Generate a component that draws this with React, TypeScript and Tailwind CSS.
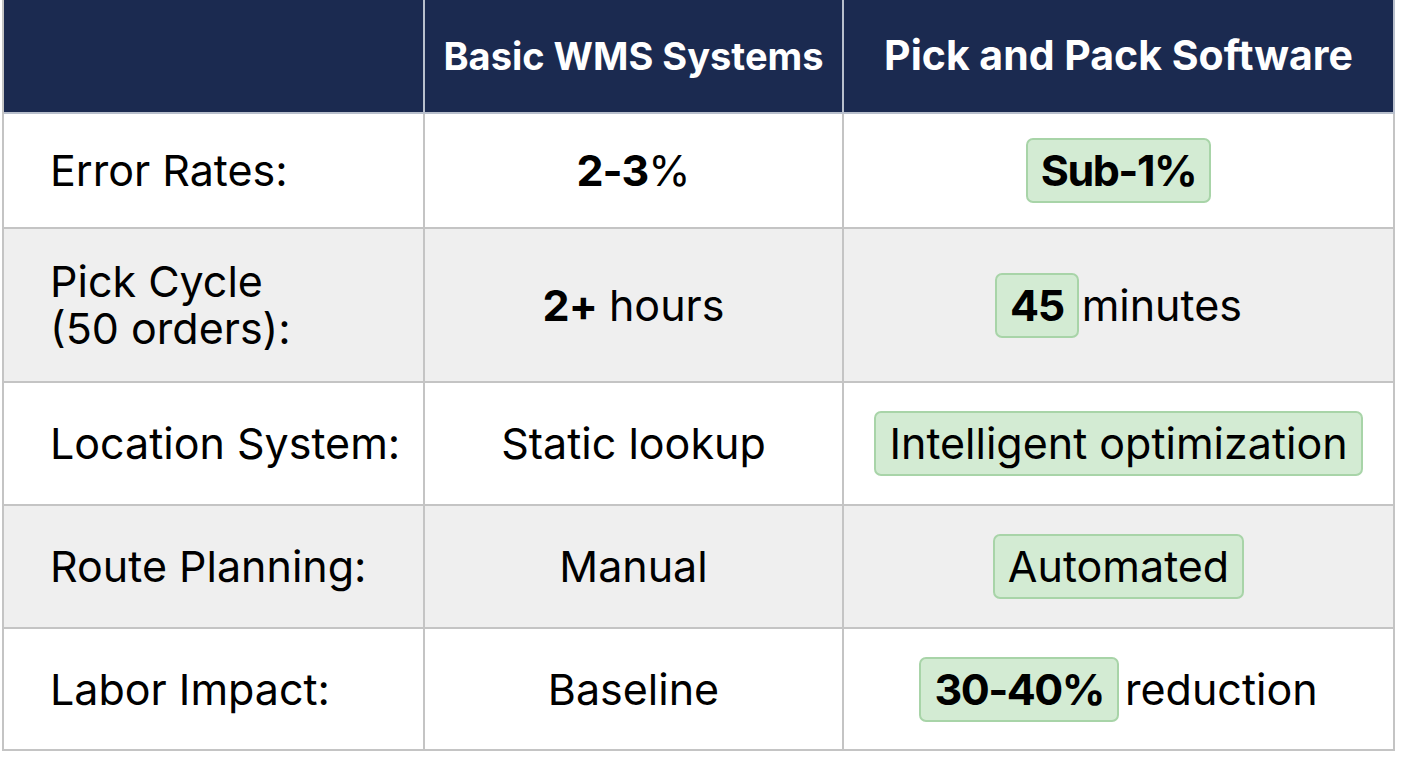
import React from "react";

const font = { fontFamily: "Inter, 'Open Sans', sans-serif" };

function Badge({ children, bold }: { children: React.ReactNode; bold?: boolean }) {
  return (
    <span
      className={`inline-flex items-center h-[65px] px-[13px] rounded-[7px] bg-[#d3ebd3] border-2 border-[#a8d4a8] ${bold ? "font-bold tracking-[-1.5px]" : ""}`}
    >
      {children}
    </span>
  );
}

const label = "flex items-center pl-[46px] border-r-2 border-b-2 border-[#c4c4c4] text-[43px] leading-[47px] text-black";
const mid = "flex items-center justify-center border-r-2 border-b-2 border-[#c4c4c4] text-[43px] text-black";
const right = "flex items-center justify-center border-r-2 border-b-2 border-[#c4c4c4] text-[43px] text-black";

export default function App() {
  return (
    <div className="w-[1408px] h-[768px] bg-white" style={font}>
      <div className="ml-[2px] w-[1393px] grid grid-cols-[421px_419px_551px] grid-rows-[114px_115px_154px_123px_123px_122px] border-l-2 border-[#c4c4c4]">
        <div className="bg-[#1b2a50] border-r-2 border-b-2 border-[#b8bfcc]" />
        <div className="bg-[#1b2a50] border-r-2 border-b-2 border-[#b8bfcc] flex items-center justify-center text-white font-bold text-[38px]">
          Basic WMS Systems
        </div>
        <div className="bg-[#1b2a50] border-r-2 border-b-2 border-[#b8bfcc] flex items-center justify-center text-white font-bold text-[41px]">
          Pick and Pack Software
        </div>

        <div className={`${label} bg-white`}>Error Rates:</div>
        <div className={`${mid} bg-white`}>
          <span><b className="tracking-[-1px]">2-3</b>%</span>
        </div>
        <div className={`${right} bg-white`}>
          <Badge bold>Sub-1%</Badge>
        </div>

        <div className={`${label} bg-[#efefef]`}>
          <span>Pick Cycle<br />(50 orders):</span>
        </div>
        <div className={`${mid} bg-[#efefef]`}>
          <span><b className="tracking-[-1px]">2+</b> hours</span>
        </div>
        <div className={`${right} bg-[#efefef]`}>
          <span className="flex items-center gap-[3px]"><Badge bold>45</Badge>minutes</span>
        </div>

        <div className={`${label} bg-white`}>Location System:</div>
        <div className={`${mid} bg-white`}>Static lookup</div>
        <div className={`${right} bg-white`}>
          <Badge>Intelligent optimization</Badge>
        </div>

        <div className={`${label} bg-[#efefef]`}>Route Planning:</div>
        <div className={`${mid} bg-[#efefef]`}>Manual</div>
        <div className={`${right} bg-[#efefef]`}>
          <Badge>Automated</Badge>
        </div>

        <div className={`${label} bg-white`}>Labor Impact:</div>
        <div className={`${mid} bg-white`}>Baseline</div>
        <div className={`${right} bg-white`}>
          <span className="flex items-center gap-[6px]"><Badge bold>30-40%</Badge>reduction</span>
        </div>
      </div>
    </div>
  );
}
